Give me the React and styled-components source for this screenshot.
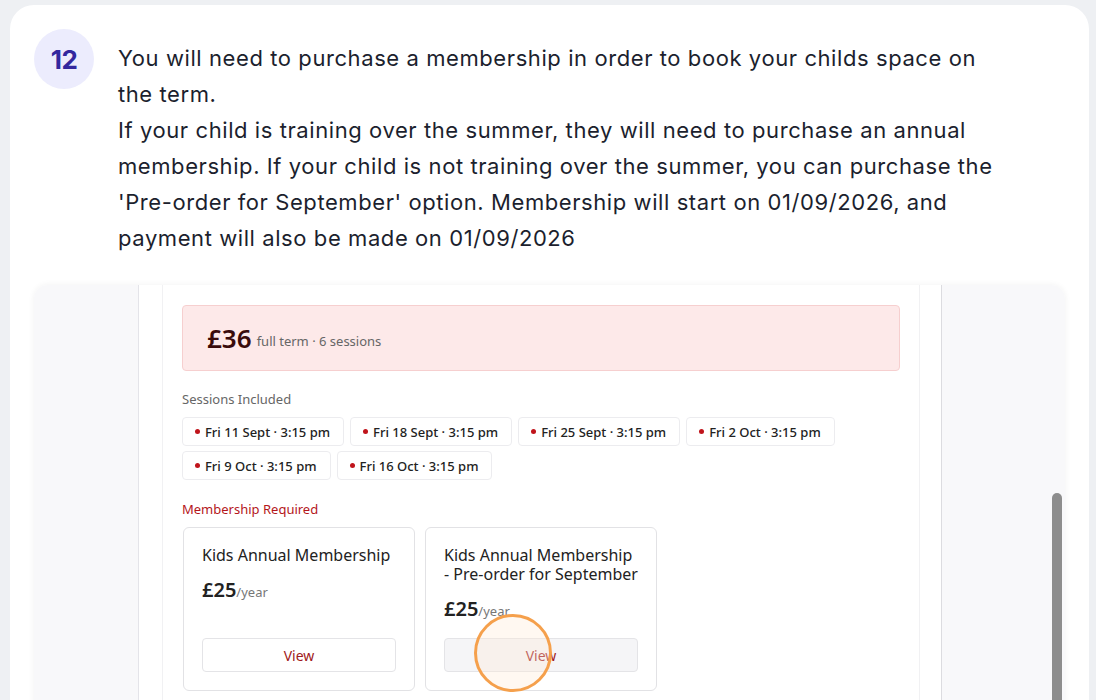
import React from "react";
import styled, { createGlobalStyle } from "styled-components";

const GlobalStyle = createGlobalStyle`
  html, body {
    margin: 0;
    padding: 0;
    background: #eef0f3;
    overflow: hidden;
  }
  * { box-sizing: border-box; }
`;

const sessions = [
  "Fri 11 Sept · 3:15 pm",
  "Fri 18 Sept · 3:15 pm",
  "Fri 25 Sept · 3:15 pm",
  "Fri 2 Oct · 3:15 pm",
  "Fri 9 Oct · 3:15 pm",
  "Fri 16 Oct · 3:15 pm",
];

const plans = [
  { title: "Kids Annual Membership", price: "£25", hover: false },
  { title: "Kids Annual Membership - Pre-order for September", price: "£25", hover: true },
];

function App() {
  return (
    <>
      <GlobalStyle />
      <Page>
        <StepCard>
          <StepHead>
            <StepBadge>12</StepBadge>
            <StepText>
              You will need to purchase a membership in order to book your childs space on
              <br />
              the term.
              <br />
              If your child is training over the summer, they will need to purchase an annual
              <br />
              membership. If your child is not training over the summer, you can purchase the
              <br />
              'Pre-order for September' option. Membership will start on 01/09/2026, and
              <br />
              payment will also be made on 01/09/2026
            </StepText>
          </StepHead>

          <Shot>
            <SidePane />
            <MainPane>
              <Modal>
                <PriceBox>
                  <PriceBig>£36</PriceBig>
                  <PriceNote>full term · 6 sessions</PriceNote>
                </PriceBox>

                <Label>Sessions Included</Label>
                <ChipList>
                  {sessions.map((s) => (
                    <Chip key={s}>
                      <Dot />
                      {s}
                    </Chip>
                  ))}
                </ChipList>

                <Label $red>Membership Required</Label>
                <PlanGrid>
                  {plans.map((p) => (
                    <PlanCard key={p.title}>
                      <PlanTitle>{p.title}</PlanTitle>
                      <PlanPrice>
                        {p.price}
                        <Per>/year</Per>
                      </PlanPrice>
                      <ViewWrap>
                        <ViewButton $hover={p.hover}>View</ViewButton>
                        {p.hover && <ClickRing />}
                      </ViewWrap>
                    </PlanCard>
                  ))}
                </PlanGrid>
              </Modal>
            </MainPane>
            <ScrollPane>
              <Thumb />
            </ScrollPane>
          </Shot>
        </StepCard>
      </Page>
    </>
  );
}

export default App;

const Page = styled.div`
  width: 1096px;
  height: 700px;
  padding: 5px 7px 0 10px;
`;

const StepCard = styled.div`
  background: #fff;
  border-radius: 24px;
  padding: 24px 24px 0 24px;
  height: 760px;
`;

const StepHead = styled.div`
  display: flex;
  gap: 24px;
  align-items: flex-start;
`;

const StepBadge = styled.div`
  flex: 0 0 60px;
  width: 60px;
  height: 60px;
  border-radius: 50%;
  background: #ececfd;
  color: #33279e;
  font-family: Inter, "Liberation Sans", sans-serif;
  font-weight: 700;
  font-size: 26px;
  letter-spacing: -0.5px;
  display: flex;
  align-items: center;
  justify-content: center;
`;

const StepText = styled.div`
  margin-top: 11px;
  font-family: Inter, "Liberation Sans", sans-serif;
  font-size: 22px;
  letter-spacing: 0.58px;
  line-height: 36px;
  color: #1c1f2e;
  white-space: nowrap;
`;

const Shot = styled.div`
  margin-top: 29px;
  height: 440px;
  display: flex;
  border-radius: 14px 14px 0 0;
  overflow: hidden;
  box-shadow: 0 0 6px rgba(0, 0, 0, 0.06);
  font-family: "Noto Sans", "Open Sans", sans-serif;
`;

const SidePane = styled.div`
  width: 105px;
  background: #f8f8fa;
  border-right: 1px solid #e4e4e9;
`;

const MainPane = styled.div`
  width: 803px;
  background: #fff;
  border-right: 1px solid #dcdce0;
  padding: 0 21px 0 23px;
`;

const Modal = styled.div`
  height: 100%;
  border-left: 1px solid #f1f1f3;
  border-right: 1px solid #f1f1f3;
  padding: 20px 19px 0 19px;
`;

const PriceBox = styled.div`
  height: 66px;
  background: #fde9e9;
  border: 1px solid #f6cfcf;
  border-radius: 4px;
  padding: 0 24px;
  display: flex;
  align-items: center;
  gap: 5px;
`;

const PriceBig = styled.span`
  font-size: 26px;
  font-weight: 600;
  color: #3a0b0b;
`;

const PriceNote = styled.span`
  font-size: 13px;
  color: #666;
  margin-top: 6px;
`;

const Label = styled.div`
  margin-top: ${(p) => (p.$red ? "20px" : "19px")};
  font-size: 13px;
  color: ${(p) => (p.$red ? "#b4161b" : "#666")};
`;

const ChipList = styled.div`
  margin-top: 9px;
  display: flex;
  flex-wrap: wrap;
  gap: 5px 6px;
  max-width: 700px;
`;

const Chip = styled.div`
  display: flex;
  align-items: center;
  gap: 5px;
  height: 29px;
  padding: 0 13px 0 12px;
  border: 1px solid #ececef;
  border-radius: 4px;
  font-size: 13px;
  font-weight: 500;
  color: #222;
`;

const Dot = styled.span`
  width: 5px;
  height: 5px;
  border-radius: 50%;
  background: #c0141b;
`;

const PlanGrid = styled.div`
  margin-top: 9px;
  margin-left: 1px;
  display: flex;
  gap: 10px;
`;

const PlanCard = styled.div`
  width: 232px;
  min-height: 164px;
  border: 1px solid #e2e2e5;
  border-radius: 6px;
  padding: 18px 18px 18px 18px;
  display: flex;
  flex-direction: column;
`;

const PlanTitle = styled.div`
  font-size: 16px;
  line-height: 19px;
  font-weight: 400;
  color: #222;
`;

const PlanPrice = styled.div`
  margin-top: 11px;
  font-size: 20px;
  font-weight: 600;
  color: #222;
`;

const Per = styled.span`
  font-size: 13px;
  font-weight: 400;
  color: #777;
`;

const ViewWrap = styled.div`
  margin-top: auto;
  position: relative;
`;

const ViewButton = styled.div`
  height: 34px;
  border: 1px solid #e4e4e7;
  border-radius: 4px;
  background: ${(p) => (p.$hover ? "#f5f5f7" : "#fff")};
  color: #a01820;
  font-size: 14px;
  display: flex;
  align-items: center;
  justify-content: center;
`;

const ClickRing = styled.div`
  position: absolute;
  left: 30px;
  top: -24px;
  width: 78px;
  height: 78px;
  border-radius: 50%;
  border: 3px solid #f5a04c;
  background: rgba(255, 236, 214, 0.35);
`;

const ScrollPane = styled.div`
  flex: 1;
  background: #f8f8fa;
  display: flex;
  justify-content: flex-end;
  padding: 208px 3px 0 0;
`;

const Thumb = styled.div`
  width: 10px;
  height: 260px;
  border-radius: 5px 5px 0 0;
  background: #8d8d8d;
`;
